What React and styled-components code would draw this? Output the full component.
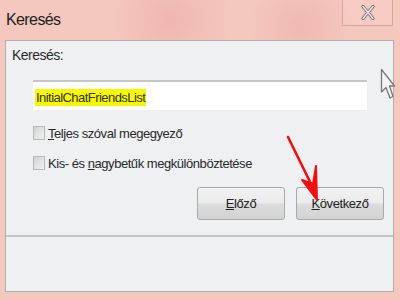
import React from "react";
import styled, { createGlobalStyle } from "styled-components";

const GlobalStyle = createGlobalStyle`
  html, body {
    margin: 0;
    padding: 0;
    width: 400px;
    height: 300px;
    overflow: hidden;
    background: #f3c4bb;
    font-family: "Liberation Sans", Arial, sans-serif;
  }
`;

const Window = styled.div`
  position: relative;
  width: 400px;
  height: 300px;
  box-sizing: border-box;
  padding: 0 6px 8px 5px;
  display: flex;
  flex-direction: column;
  background:
    radial-gradient(circle at 170px 20px, rgba(230, 150, 150, 0.35), transparent 60px),
    radial-gradient(circle at 300px 25px, rgba(230, 150, 150, 0.3), transparent 50px),
    #f4c7bf;
`;

const TitleBar = styled.div`
  height: 40px;
  display: flex;
  justify-content: space-between;
  align-items: flex-start;
`;

const Title = styled.span`
  margin: 11px 0 0 1px;
  font-size: 16px;
  letter-spacing: -0.6px;
  color: #222;
`;

const CloseButton = styled.div`
  width: 51px;
  height: 26px;
  margin-right: 1px;
  box-sizing: border-box;
  border: 1px solid #d9a59c;
  border-top: none;
  display: flex;
  align-items: center;
  justify-content: center;
  background: rgba(245, 205, 198, 0.6);
  svg {
    display: block;
  }
`;

const Panel = styled.div`
  flex: 1;
  box-sizing: border-box;
  border: 1px solid #b3aeae;
  background: #eef0f2;
  display: flex;
  flex-direction: column;
`;

const Body = styled.div`
  padding: 6px 9px 0 6px;
  height: 193px;
  box-sizing: border-box;
  display: flex;
  flex-direction: column;
`;

const FieldLabel = styled.div`
  font-size: 14px;
  letter-spacing: -0.5px;
  color: #2a2a2a;
  height: 16px;
`;

const Input = styled.div`
  margin: 17px 0 0 21px;
  width: 334px;
  height: 30px;
  box-sizing: border-box;
  border-top: 2px solid #c6c6c6;
  background: #fff;
  padding: 6px 0 0 2px;
`;

const Selected = styled.span`
  background: #f7f700;
  color: #333;
  font-size: 13px;
  letter-spacing: -0.55px;
  padding: 1px 1px;
`;

const Options = styled.div`
  margin: 16px 0 0 21px;
  display: flex;
  flex-direction: column;
  gap: 16px;
`;

const Option = styled.label`
  display: flex;
  align-items: center;
  gap: 3px;
  font-size: 13px;
  letter-spacing: -0.45px;
  color: #2a2a2a;
  height: 14px;
`;

const Box = styled.span`
  width: 12px;
  height: 14px;
  box-sizing: border-box;
  border: 1px solid #b9b9b9;
  background: linear-gradient(135deg, #d3d3d3, #f2f2f2);
`;

const Key = styled.span`
  text-decoration: underline;
`;

const Buttons = styled.div`
  margin-top: 17px;
  display: flex;
  justify-content: flex-end;
  gap: 11px;
`;

const Button = styled.div`
  width: 88px;
  height: 33px;
  box-sizing: border-box;
  border: 1px solid #a9a9a9;
  border-radius: 3px;
  background: linear-gradient(#f2f2f2 0%, #ebebeb 48%, #dcdcdc 52%, #d2d2d2 100%);
  display: flex;
  align-items: center;
  justify-content: center;
  font-size: 13px;
  letter-spacing: -0.4px;
  color: #222;
`;

const Separator = styled.div`
  margin-top: 1px;
  height: 2px;
  background: #c4c4c4;
`;

const Footer = styled.div`
  flex: 1;
  background: #f0f1f3;
`;

const Arrow = styled.svg`
  position: absolute;
  left: 280px;
  top: 130px;
`;

const Cursor = styled.svg`
  position: absolute;
  left: 380px;
  top: 68px;
`;

export default function App() {
  return (
    <Window>
      <GlobalStyle />
      <TitleBar>
        <Title>Keresés</Title>
        <CloseButton>
          <svg width="14" height="15" viewBox="0 0 14 15">
            <path
              d="M2 1.5 L12 13.5 M12 1.5 L2 13.5"
              stroke="#7a6a6a"
              strokeWidth="3.2"
              strokeLinecap="round"
            />
            <path
              d="M2 1.5 L12 13.5 M12 1.5 L2 13.5"
              stroke="#f4f0f0"
              strokeWidth="1.4"
              strokeLinecap="round"
            />
          </svg>
        </CloseButton>
      </TitleBar>
      <Panel>
        <Body>
          <FieldLabel>Keresés:</FieldLabel>
          <Input>
            <Selected>InitialChatFriendsList</Selected>
          </Input>
          <Options>
            <Option>
              <Box />
              <span>
                <Key>T</Key>eljes szóval megegyező
              </span>
            </Option>
            <Option>
              <Box />
              <span>
                Kis- és <Key>n</Key>agybetűk megkülönböztetése
              </span>
            </Option>
          </Options>
          <Buttons>
            <Button>
              <span>
                <Key>E</Key>lőző
              </span>
            </Button>
            <Button>
              <span>
                <Key>K</Key>övetkező
              </span>
            </Button>
          </Buttons>
        </Body>
        <Separator />
        <Footer />
      </Panel>
      <Arrow width="50" height="75" viewBox="0 0 50 75">
        <path d="M8 7 L34 60" stroke="#f01010" strokeWidth="2.6" strokeLinecap="round" />
        <path d="M22 50 L37 70 L36 36 L33 54 Z" fill="#f01010" stroke="#f01010" strokeWidth="2" strokeLinejoin="round" />
      </Arrow>
      <Cursor width="16" height="34" viewBox="0 0 16 34">
        <path
          d="M1.5 1.5 L1.5 24 L6 19.5 L10 30 L13 28.5 L9.5 18 L14.5 18 Z"
          fill="#f4f4f4"
          stroke="#777"
          strokeWidth="1.3"
          strokeLinejoin="round"
        />
      </Cursor>
    </Window>
  );
}
